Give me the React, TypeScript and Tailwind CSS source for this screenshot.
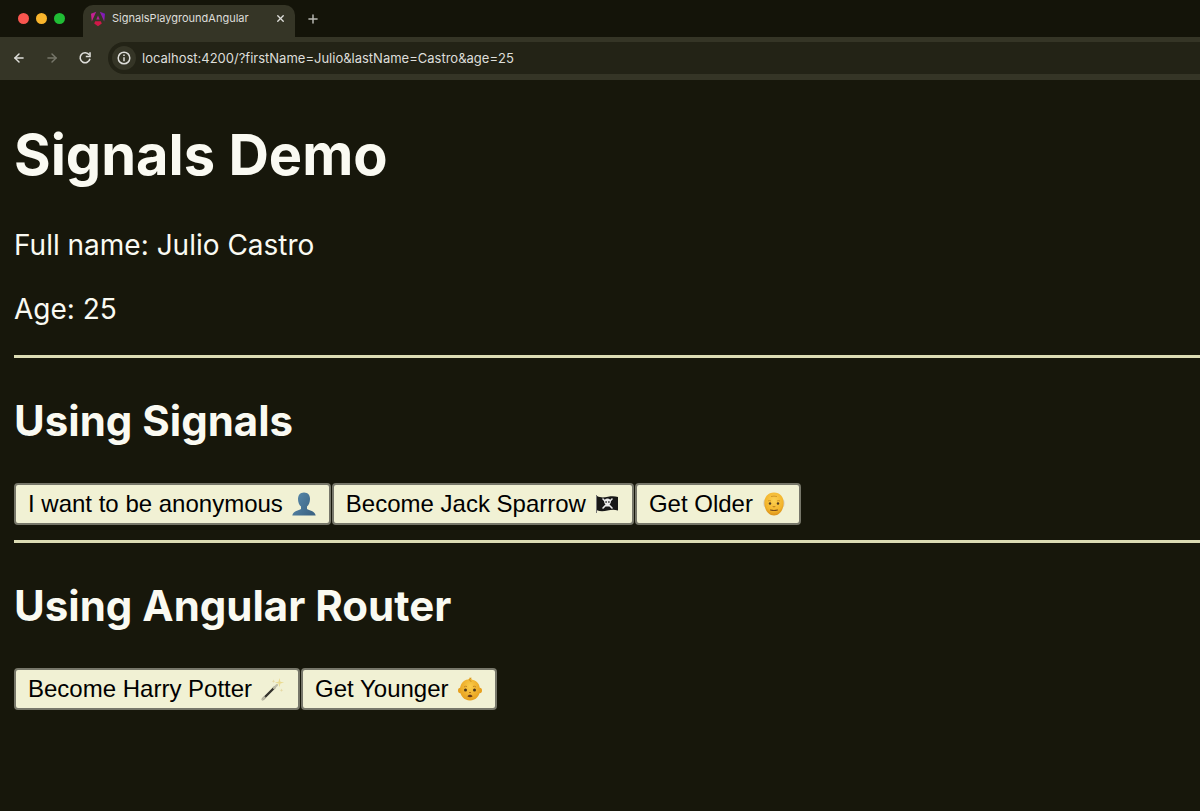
import React from 'react';
import { ArrowLeft, ArrowRight, Plus, X } from 'lucide-react';

function AngularLogo() {
  return (
    <svg viewBox="0 0 16 16" className="size-4 shrink-0" aria-hidden="true">
      <defs>
        <linearGradient id="shield" x1="0" y1="0.4" x2="1" y2="0">
          <stop offset="0" stopColor="#d02090" />
          <stop offset="0.5" stopColor="#a82098" />
          <stop offset="1" stopColor="#6418d0" />
        </linearGradient>
      </defs>
      <path fill="url(#shield)" d="M6.200.8 1 2.700l.8 7.800L6.200.8Zm3.600 0L15 2.700l-.8 7.800L9.800.8ZM8 4.500 6.300 8.400h3.400L8 4.500Z" />
      <path fill="#d01848" d="M5.200 10.200h5.600l1 2.400L8 15.200l-3.800-2.600 1-2.400Z" />
    </svg>
  );
}

function ReloadIcon() {
  return (
    <svg viewBox="0 0 14 14" className="size-[14px]" fill="none" stroke="currentColor" strokeWidth="1.6" aria-hidden="true">
      <path d="M11.2 3.8A5 5 0 1 0 12 7.8" />
      <path d="M12 1.3v4.2H7.8" />
    </svg>
  );
}

function InfoIcon() {
  return (
    <svg viewBox="0 0 14 14" className="size-[14px]" fill="none" stroke="currentColor" strokeWidth="1.5" aria-hidden="true">
      <circle cx="7" cy="7" r="5.8" />
      <path d="M7 6.3v4M7 3.6v1.5" />
    </svg>
  );
}

function BustIcon() {
  return (
    <svg viewBox="0 0 26 26" className="size-[26px]" aria-hidden="true">
      <defs>
        <linearGradient id="bust" x1="0" y1="0" x2="1" y2="0.6">
          <stop offset="0" stopColor="#5a8cae" />
          <stop offset="1" stopColor="#3d6585" />
        </linearGradient>
      </defs>
      <path fill="url(#bust)" d="M13 1.500c4 0 6 2.800 6 6.500 0 3.200-1.200 6.200-3 7.500v2.400c2 1.300 8 1.800 8.700 6.600H1.300C2 19.700 8 19.200 10 17.900v-2.400C8.200 14.200 7 11.200 7 8c0-3.700 2-6.500 6-6.500Z" />
    </svg>
  );
}

function PirateFlagIcon() {
  return (
    <svg viewBox="0 0 26 26" className="size-[26px]" aria-hidden="true">
      <path d="M2.500 4v18" stroke="#777" strokeWidth="1" />
      <path fill="#171717" d="M3 5c4 2 7 1.500 11 .7 4-.8 7-.6 10 .3v13.500c-4-1.200-7-.8-10.500 0C9.500 20.400 6 20.500 3 19.200V5Z" />
      <path d="m9 8 9 9m0-9-9 9" stroke="#ececec" strokeWidth="1.600" strokeLinecap="round" />
      <path fill="#ececec" d="M13.500 7.500c2.200 0 3.300 1.400 3.300 3.200 0 1.400-.7 2.200-1.500 2.700v2h-3.600v-2c-.8-.5-1.500-1.300-1.500-2.700 0-1.800 1.100-3.200 3.300-3.200Z" />
      <path fill="#171717" d="M11.400 10.300h1.400v1.500h-1.400zm2.800 0h1.400v1.500h-1.400z" />
    </svg>
  );
}

function OlderIcon() {
  return (
    <svg viewBox="0 0 26 26" className="size-[26px]" aria-hidden="true">
      <defs>
        <radialGradient id="older" cx="0.5" cy="0.35" r="0.65">
          <stop offset="0" stopColor="#fbd052" />
          <stop offset="0.7" stopColor="#f3b52c" />
          <stop offset="1" stopColor="#d99018" />
        </radialGradient>
      </defs>
      <path fill="#d8d6cc" d="M3.500 8.500C1.800 10 1.800 14 3.400 16l2 .5V8Zm19 0c1.700 1.500 1.700 5.500.1 7.500l-2 .5V8Z" />
      <path fill="url(#older)" d="M13 1.500c6 0 9.700 4.500 9.700 10.500S19 24.500 13 24.500 3.300 18 3.300 12 7 1.500 13 1.500Z" />
      <path d="M7 10q1.500-1 3 0m6 0q1.500-1 3 0M10 5.500q3-.8 6 0" fill="none" stroke="#c88b20" strokeWidth=".8" />
      <circle cx="9" cy="12.500" r="1.200" fill="#513b20" />
      <circle cx="17" cy="12.500" r="1.200" fill="#513b20" />
      <path d="M11.700 15.500q1.300.7 2.600 0" fill="none" stroke="#bd7b16" />
      <path d="M9.500 19q3.500 1 7 0" fill="none" stroke="#794b19" strokeWidth="1.200" strokeLinecap="round" />
    </svg>
  );
}

function WandIcon() {
  return (
    <svg viewBox="0 0 26 26" className="size-[26px]" aria-hidden="true">
      <path d="m3 23 11.500-11.500" stroke="#34332c" strokeWidth="2.400" strokeLinecap="round" />
      <path d="m2.500 23.500 2-2m9.500-9.500 3-3" stroke="#bdbba6" strokeWidth="2.200" strokeLinecap="round" />
      <path fill="#eadb91" d="m19.500 2 .9 3.700 3.700.9-3.700 1-.9 3.700-1-3.700-3.700-1 3.700-.9Z" />
      <path fill="#e6d9a4" d="m13.500 3.500.5 1.300 1.300.5-1.300.5-.5 1.300-.5-1.300-1.300-.5 1.300-.5Zm8 9 .5 1.300 1.300.5-1.300.5-.5 1.300-.5-1.300-1.300-.5 1.300-.5Z" />
    </svg>
  );
}

function BabyIcon() {
  return (
    <svg viewBox="0 0 26 26" className="size-[26px]" aria-hidden="true">
      <defs>
        <radialGradient id="baby" cx="0.5" cy="0.4" r="0.6">
          <stop offset="0" stopColor="#fbcd4a" />
          <stop offset="1" stopColor="#e7a01e" />
        </radialGradient>
      </defs>
      <ellipse cx="3.300" cy="14.500" rx="2.300" ry="2.800" fill="#e7a01e" />
      <ellipse cx="22.700" cy="14.500" rx="2.300" ry="2.800" fill="#e7a01e" />
      <path fill="url(#baby)" d="M13 1c.8 1.200 1.300 2 2.300 2.700 5 .8 7.700 5 7.700 10.100 0 6-4 10.700-10 10.700S3 19.800 3 13.800C3 8.400 6.200 4 11 3.500 12 3 12.600 2.200 13 1Z" />
      <path d="M14 2.300c-2 .8-2 2.400 0 3" fill="none" stroke="#c98a1c" strokeLinecap="round" />
      <path d="M7 11q1.500-1.200 3-.5m6 0q1.500-.7 3 .5" fill="none" stroke="#c58520" />
      <circle cx="8.500" cy="14" r="1.500" fill="#4c351b" />
      <circle cx="17.500" cy="14" r="1.500" fill="#4c351b" />
      <path d="M12 16.500h2" stroke="#bc7518" />
      <path fill="#65391a" d="M10.500 20.500c.5-2.300 4.500-2.300 5 0-1.300.9-3.700.9-5 0Z" />
    </svg>
  );
}

function ActionButton({ children, icon }: { children: React.ReactNode; icon: React.ReactNode }) {
  return (
    <button
      type="button"
      className="flex h-[42px] items-center gap-2 whitespace-nowrap rounded-[4px] border-2 border-[#77776a] bg-[#f1f1d4] px-3 font-['Liberation_Sans',Arial,sans-serif] text-[24px] leading-none text-black"
    >
      {children}
      {icon}
    </button>
  );
}

function BrowserBar() {
  return (
    <header className="bg-[#141409] text-[#dededa]">
      <div className="flex h-[37px] items-end">
        <div className="flex h-full w-[83px] shrink-0 items-center gap-[7px] pl-[18px]">
          <span className="size-[11px] rounded-full bg-[#f9564f]" />
          <span className="size-[11px] rounded-full bg-[#f9b52c]" />
          <span className="size-[11px] rounded-full bg-[#20bd35]" />
        </div>
        <div className="flex h-8 w-[212px] items-center rounded-t-[10px] bg-[#353526] pb-[5px] pl-[7px] pr-2">
          <AngularLogo />
          <span className="ml-[6px] flex-1 text-[11px]">SignalsPlaygroundAngular</span>
          <button type="button" aria-label="Close tab" className="flex size-[14px] items-center justify-center">
            <X size={11} strokeWidth={3} />
          </button>
        </div>
        <button type="button" aria-label="New tab" className="ml-[10px] flex h-full w-4 items-center justify-center text-[#b9b9b4]">
          <Plus size={14} strokeWidth={2.5} />
        </button>
      </div>
      <div className="flex h-[43px] items-center bg-[#353526] pb-[2px] pl-3">
        <button type="button" aria-label="Back" className="flex w-[14px] justify-center"><ArrowLeft size={16} strokeWidth={2.5} /></button>
        <button type="button" aria-label="Forward" className="ml-[19px] flex w-[14px] justify-center text-[#77776a]"><ArrowRight size={16} strokeWidth={2.5} /></button>
        <button type="button" aria-label="Reload" className="ml-[19px]"><ReloadIcon /></button>
        <div className="ml-4 flex h-8 flex-1 items-center rounded-l-full bg-[#232316] pl-1">
          <button type="button" aria-label="Site information" className="flex size-6 items-center justify-center rounded-full bg-[#353526]"><InfoIcon /></button>
          <input
            aria-label="Address"
            readOnly
            value="localhost:4200/?firstName=Julio&lastName=Castro&age=25"
            className="ml-[6px] h-6 min-w-0 flex-1 bg-transparent text-[13px] outline-none"
          />
        </div>
      </div>
    </header>
  );
}

export default function App() {
  return (
    <div className="min-h-screen overflow-x-hidden bg-[#17170b] font-['Inter',sans-serif] text-[#fafaf2]">
      <BrowserBar />
      <main className="pl-[14px] pt-10">
        <h1 className="text-[56px] font-bold leading-[70px]">Signals Demo</h1>
        <p className="mt-[38px] text-[28px] leading-[34px]">Full name: Julio Castro</p>
        <p className="mt-[30px] text-[28px] leading-[34px]">Age: 25</p>
        <hr className="mt-[29px] border-0 border-t-[3px] border-[#dcdcb4]" />
        <section>
          <h2 className="mt-[37px] text-[42px] font-bold leading-[52px]">Using Signals</h2>
          <div className="mt-9 flex gap-px">
            <ActionButton icon={<BustIcon />}>I want to be anonymous</ActionButton>
            <ActionButton icon={<PirateFlagIcon />}>Become Jack Sparrow</ActionButton>
            <ActionButton icon={<OlderIcon />}>Get Older</ActionButton>
          </div>
        </section>
        <hr className="mt-[15px] border-0 border-t-[3px] border-[#dcdcb4]" />
        <section>
          <h2 className="mt-[37px] text-[42px] font-bold leading-[52px]">Using Angular Router</h2>
          <div className="mt-9 flex gap-px">
            <ActionButton icon={<WandIcon />}>Become Harry Potter</ActionButton>
            <ActionButton icon={<BabyIcon />}>Get Younger</ActionButton>
          </div>
        </section>
      </main>
    </div>
  );
}
